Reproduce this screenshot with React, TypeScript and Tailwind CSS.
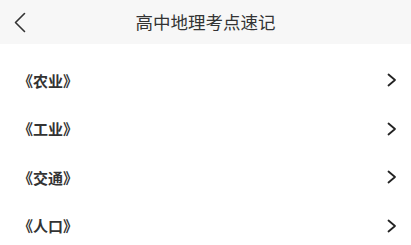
import React from "react";

const items = ["《农业》", "《工业》", "《交通》", "《人口》"];

export default function App() {
  return (
    <div
      className="w-[411px] h-[245px] bg-white overflow-hidden"
      style={{ fontFamily: '"Noto Sans CJK SC", "Noto Sans", sans-serif' }}
    >
      <div className="relative h-[44px] bg-[#f7f7f7] flex items-center justify-center">
        <svg
          className="absolute left-[13px] top-[12px]"
          width="14"
          height="21"
          viewBox="0 0 14 21"
          fill="none"
        >
          <path d="M11.5 1.5 L2.5 10.5 L11.5 19.5" stroke="#333" strokeWidth="1.6" strokeLinecap="round" strokeLinejoin="round" />
        </svg>
        <span className="text-[17.5px] text-[#333] leading-none">高中地理考点速记</span>
      </div>
      <div className="pt-3">
        {items.map((t) => (
          <div key={t} className="h-[48.5px] flex items-center justify-between pl-[18px] pr-[13px]">
            <span className="text-[15px] font-bold text-[#333] leading-none">{t}</span>
            <svg width="12" height="14" viewBox="0 0 12 14" fill="none">
              <path d="M2.5 1.5 L9 7 L2.5 12.5" stroke="#222" strokeWidth="1.8" strokeLinecap="round" strokeLinejoin="round" />
            </svg>
          </div>
        ))}
      </div>
    </div>
  );
}
